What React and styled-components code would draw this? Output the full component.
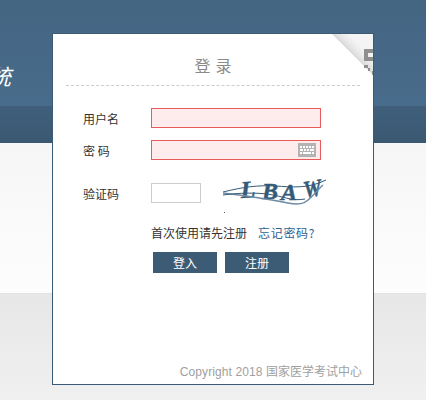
import React from "react";
import styled, { createGlobalStyle } from "styled-components";

const Global = createGlobalStyle`
  html, body { margin: 0; padding: 0; height: 100%; overflow: hidden; background: #efefef; }
  body { font-family: "Liberation Sans", "Noto Sans CJK SC", sans-serif; font-size: 12px; color: #333; }
  * { box-sizing: border-box; }
`;

const Page = styled.div`
  position: relative;
  width: 426px;
  height: 400px;
  overflow: hidden;
`;
const Banner = styled.div`
  height: 106px;
  background: linear-gradient(#446582, #486c8b);
  display: flex;
  align-items: center;
  padding-top: 44px;
`;
const BannerTitle = styled.div`
  margin-left: -11px;
  font-size: 22px;
  font-style: italic;
  color: #fff;
  font-family: "Noto Sans CJK SC", sans-serif;
  font-weight: 400;
  line-height: 24px;
`;
const NavBand = styled.div`
  height: 37px;
  background: linear-gradient(#3f5f7c, #3b5871);
`;
const Middle = styled.div`
  height: 151px;
  background: linear-gradient(#f6f6f6, #fdfdfd);
  border-bottom: 1px solid #e2e2e2;
`;
const Bottom = styled.div`
  height: 106px;
  background: linear-gradient(#e7e7e7, #f0f0f0);
`;
const Card = styled.div`
  position: absolute;
  left: 52px;
  top: 33px;
  width: 322px;
  height: 352px;
  background: #fff;
  border: 1px solid #3a5a78;
  padding: 0 13px;
  display: flex;
  flex-direction: column;
`;
const Fold = styled.div`
  position: absolute;
  top: 0;
  right: 0;
  width: 41px;
  height: 41px;
  clip-path: polygon(0 0, 100% 0, 100% 100%);
  background: linear-gradient(225deg, #f4f4f4 0%, #f4f4f4 28%, #ececec 38%, #d9d9d9 50%);
`;
const FoldIcon = styled.svg`
  position: absolute;
  top: 15px;
  right: 0;
  width: 9px;
  height: 26px;
`;
const Heading = styled.div`
  height: 52px;
  border-bottom: 1px dashed #ccc;
  text-align: center;
  font-size: 16px;
  line-height: 18px;
  padding: 22px 0 0 5px;
  letter-spacing: 5px;
  color: #8a8a8a;
  font-family: "Noto Sans CJK SC", sans-serif;
  font-weight: 400;
`;
const Form = styled.div`
  display: flex;
  flex-direction: column;
  margin-top: 21px;
  padding-left: 17px;
`;
const Row = styled.div`
  display: flex;
  align-items: center;
  height: 22px;
  margin-top: ${(p) => p.$top || 0}px;
`;
const Label = styled.div`
  width: 68px;
  font-size: 12px;
  color: #333;
  white-space: pre;
  font-family: "Noto Sans CJK SC", sans-serif;
  font-weight: 400;
`;
const InputBox = styled.div`
  position: relative;
  width: 170px;
  height: 20px;
  background: #feecec;
  border: 1px solid #e85a5a;
`;
const CodeBox = styled.div`
  width: 50px;
  height: 20px;
  background: #fff;
  border: 1px solid #ccc;
`;
const KeyIcon = styled.svg`
  position: absolute;
  right: 4px;
  top: 2px;
  width: 18px;
  height: 14px;
`;
const Captcha = styled.svg`
  width: 104px;
  height: 36px;
  margin: 7px 0 0 22px;
  flex: none;
  overflow: visible;
`;
const LinkRow = styled.div`
  display: flex;
  margin: 21px 0 0 85px;
  font-size: 12px;
  line-height: 16px;
  color: #333;
  font-family: "Noto Sans CJK SC", sans-serif;
  font-weight: 400;
  white-space: nowrap;
`;
const Forgot = styled.a`
  margin-left: 11px;
  color: #2f6390;
  cursor: pointer;
  letter-spacing: 0.7px;
`;
const Buttons = styled.div`
  display: flex;
  gap: 8px;
  margin: 11px 0 0 87px;
`;
const Btn = styled.button`
  width: 64px;
  height: 21px;
  padding: 0;
  border: 0;
  background: #3c5c76;
  color: #fff;
  font-size: 12px;
  font-family: "Noto Sans CJK SC", sans-serif;
  font-weight: 400;
  line-height: 18px;
`;
const Copyright = styled.div`
  margin-top: auto;
  margin-bottom: 4px;
  text-align: right;
  margin-right: -2px;
  font-size: 12px;
  line-height: 16px;
  color: #a0a0a0;
  font-family: "Noto Sans CJK SC", sans-serif;
  font-weight: 400;
  white-space: nowrap;
`;
const CopyrightLatin = styled.span`
  font-family: "Liberation Sans", sans-serif;
  letter-spacing: 0.1px;
`;
const CaptchaText = styled.text`
  font-family: "Liberation Serif", serif;
  font-weight: bold;
  font-style: italic;
  font-size: 24px;
  fill: #355a78;
  stroke: #355a78;
  stroke-width: 0.5;
`;

const App = () => (
  <Page>
    <Global />
    <Banner>
      <BannerTitle>统</BannerTitle>
    </Banner>
    <NavBand />
    <Middle />
    <Bottom />
    <Card>
      <Fold />
      <FoldIcon viewBox="0 0 9 26">
        <path d="M0 0h9v12H0V0zm4 4v4h5V4H4z" fill="#8f8f8f" fillRule="evenodd" />
        <path d="M0 16h4v3h2v3h3v4H8v-4H4v-3H0z" fill="#8f8f8f" />
      </FoldIcon>
      <Heading>登录</Heading>
      <Form>
        <Row $top={0}>
          <Label>用户名</Label>
          <InputBox />
        </Row>
        <Row $top={10}>
          <Label>{"密 码"}</Label>
          <InputBox>
            <KeyIcon viewBox="0 0 18 14">
              <rect width="18" height="14" fill="#b3b3b3" />
              <path d="M2 3h2v2H2zM5 3h2v2H5zM8 3h2v2H8zM11 3h2v2h-2zM14 3h2v2h-2zM2 6h3v2H2zM6 6h2v2H6zM9 6h2v2H9zM12 6h4v2h-4zM2 9h2v2H2zM5 9h8v2H5zM14 9h2v2h-2z" fill="#fff" />
            </KeyIcon>
          </InputBox>
        </Row>
        <Row $top={21}>
          <Label>验证码</Label>
          <CodeBox />
          <Captcha viewBox="0 0 104 36">
            <CaptchaText x="18" y="19" transform="rotate(-3 18 19)">L</CaptchaText>
            <CaptchaText x="39" y="20">B</CaptchaText>
            <CaptchaText x="58" y="21">A</CaptchaText>
            <CaptchaText x="82" y="19" transform="rotate(-10 82 19)" textLength="18" lengthAdjust="spacingAndGlyphs">W</CaptchaText>
            <path d="M0 13C20 8 35 6 52 7S85 10 103 1" stroke="#355a78" strokeWidth="1" fill="none" />
            <path d="M0 14C25 17 45 20 65 24S85 20 100 6" stroke="#6f8ba3" strokeWidth="1.4" fill="none" />
            <path d="M0 16C15 14 35 13 50 16S70 22 82 20" stroke="#355a78" strokeWidth="1" fill="none" />
            <rect x="1" y="33" width="1" height="1" fill="#355a78" />
          </Captcha>
        </Row>
      </Form>
      <LinkRow>
        首次使用请先注册
        <Forgot>忘记密码?</Forgot>
      </LinkRow>
      <Buttons>
        <Btn>登入</Btn>
        <Btn>注册</Btn>
      </Buttons>
      <Copyright>
        <CopyrightLatin>Copyright 2018 </CopyrightLatin>国家医学考试中心
      </Copyright>
    </Card>
  </Page>
);

export default App;
